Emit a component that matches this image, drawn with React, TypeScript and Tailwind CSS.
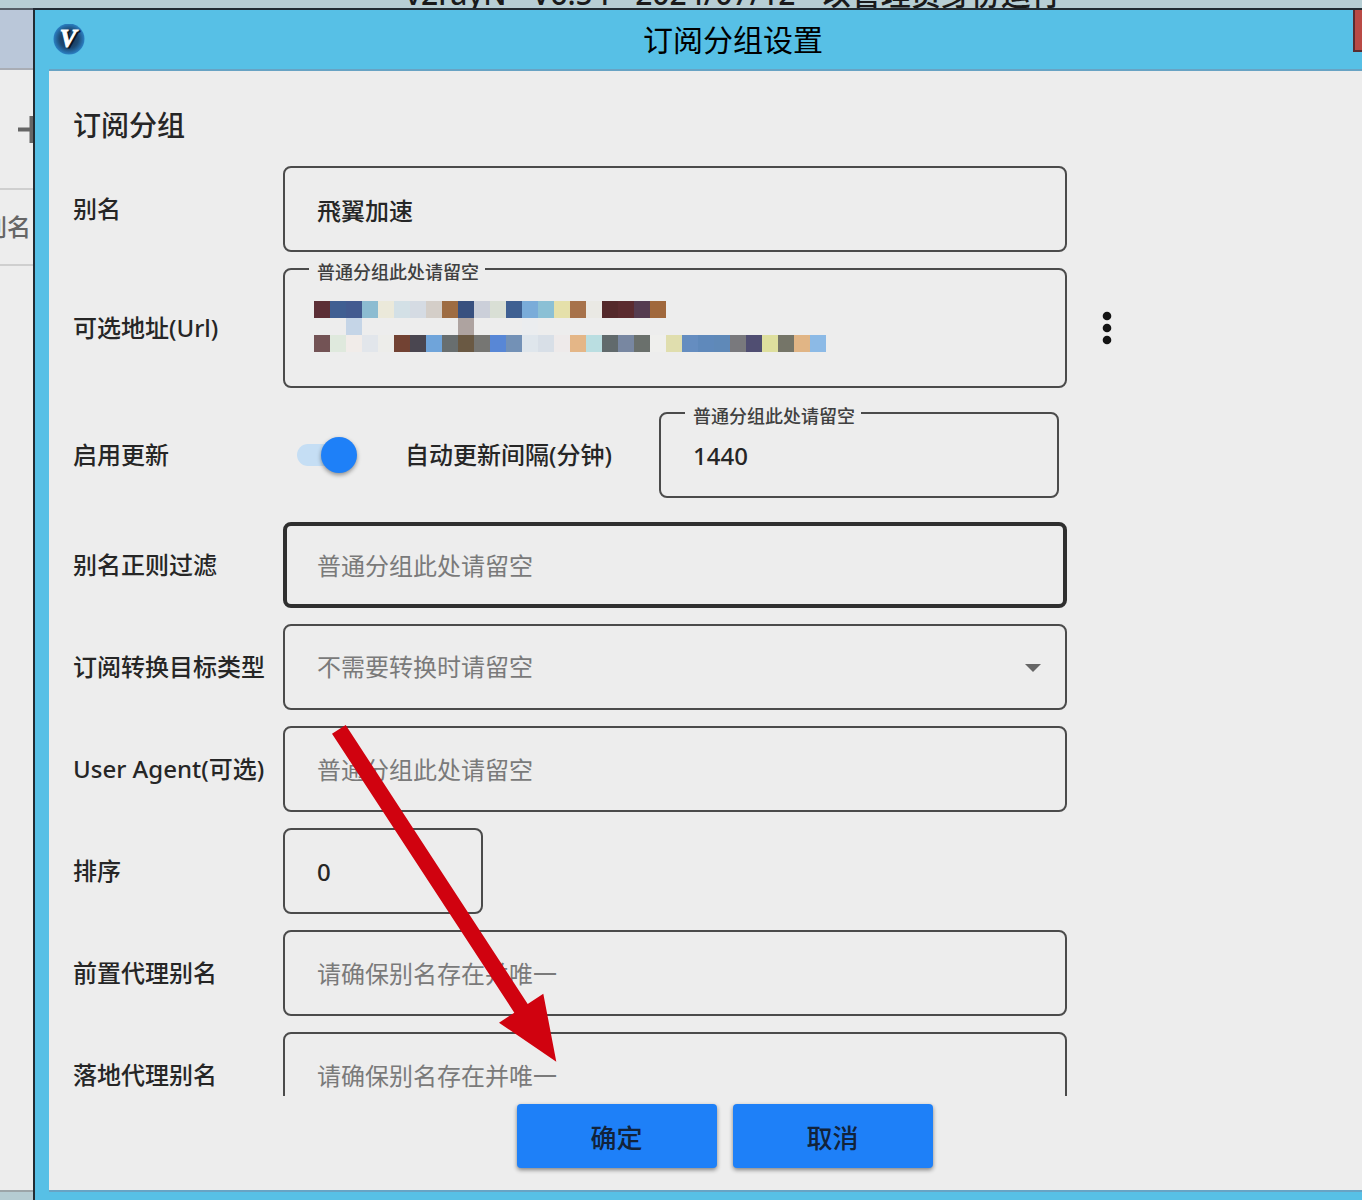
import React from "react";
import { clsx } from "clsx";

const FIELD = "block h-[86px] rounded-lg bg-transparent text-2xl font-medium text-[#262626] placeholder:font-normal placeholder:text-[#7a7a7a] placeholder:opacity-100 outline-none";
const THIN = "border-2 border-[#4b4b4b] px-8";
const THICK = "border-4 border-[#2f2f2f] px-[30px]";
const ACTION = "h-16 w-[200px] rounded bg-[#1e80f8] pt-1 text-[26px] font-medium text-[#12233a] shadow-[0_2px_4px_rgba(0,0,0,0.45)]";

const CELL_W = 16;
const CELL_H = 17;

// one array per line of the censored url, "" is an empty cell
const MOSAIC: string[][] = [
  [
    "#5c2f36", "#405f92", "#435b90", "#8cbcd1", "#ebe9da", "#d3e0e6", "#d5dbe3", "#d4cec8",
    "#9e6c42", "#38507f", "#cbcfd9", "#d9dfd5", "#3f6092", "#7aacd9", "#8bc0d5", "#e5e0aa",
    "#a7724a", "#eae9e4", "#54292b", "#5b2b2f", "#553c50", "#a0683c",
  ],
  ["", "", "#c5d5e7", "", "", "", "", "", "", "#aea3a0", "", "", "", "#ebedef"],
  [
    "#735355", "#dfe9dd", "#f1ece9", "#e2e6eb", "#ededea", "#724233", "#4a4650", "#6fa4da",
    "#686e6f", "#6a5943", "#767673", "#5887d6", "#7391b6", "#dfe6ec", "#d8dfe7", "#eeeaea",
    "#e4b687", "#badee1", "#616a6c", "#7887a1", "#6a706c", "#efefed", "#e0deae", "#658dc0",
    "#5f89bb", "#5f89b8", "#79797d", "#504e72", "#dedf9e", "#757568", "#e1b585", "#8cbae6",
  ],
];

function Mosaic() {
  return (
    <svg width="512" height="51" shapeRendering="crispEdges" className="pointer-events-none absolute left-[31px] top-[33px]" aria-hidden="true">
      {MOSAIC.map((line, y) =>
        line.map((fill, x) =>
          fill ? <rect key={`${x}-${y}`} x={x * CELL_W} y={y * CELL_H} width={CELL_W} height={CELL_H} fill={fill} /> : null
        )
      )}
    </svg>
  );
}

function Row({ id, label, children, className }: { id: string; label: string; children: React.ReactNode; className?: string }) {
  return (
    <div className={clsx("flex items-center", className)}>
      <label htmlFor={id} className="w-[210px] shrink-0 whitespace-nowrap text-2xl font-medium text-[#262626]">
        {label}
      </label>
      {children}
    </div>
  );
}

function Hint({ children }: { children: React.ReactNode }) {
  return (
    <span className="pointer-events-none absolute -top-2 left-[26px] bg-[#ededed] pl-2 pr-1.5 text-lg font-medium leading-6 text-[#404040]">{children}</span>
  );
}

function Logo() {
  return (
    <svg width="32" height="32" viewBox="0 0 32 32" className="shrink-0" aria-hidden="true">
      <defs>
        <radialGradient id="logo-bg">
          <stop offset="0%" stopColor="#16304a" />
          <stop offset="60%" stopColor="#1d4a74" />
          <stop offset="100%" stopColor="#2b80c4" />
        </radialGradient>
      </defs>
      <circle cx="16" cy="15" r="15.500" fill="url(#logo-bg)" />
      <g fontFamily="Liberation Serif, serif" fontSize="25" fontWeight="700" fontStyle="italic" textAnchor="middle" strokeWidth="1">
        <text x="17" y="24" fill="#0b1622" stroke="#0b1622">V</text>
        <text x="15" y="23" fill="#ffffff" stroke="#ffffff">V</text>
      </g>
    </svg>
  );
}

function BackWindow() {
  return (
    <div className="flex w-[33px] shrink-0 flex-col overflow-hidden border-t-2 border-[#555d66] bg-[#b5ccd2] pb-2">
      <div className="h-[60px] shrink-0 border-b-2 border-[#a9adb5] bg-[#bac7d9]" />
      <div className="flex flex-1 flex-col border-b-2 border-[#9ca5a8] bg-[#ededed]">
        <div className="flex h-[120px] shrink-0 items-center border-b-2 border-[#cfcfcf] pl-[18px]">
          <svg width="27" height="27" viewBox="0 0 27 27" className="shrink-0" aria-hidden="true">
            <path d="M0 11.500h11.500V0h4v11.500H27v4H15.500V27h-4V15.500H0z" fill="#666666" />
          </svg>
        </div>
        <div className="flex h-[76px] shrink-0 items-center justify-end border-b-2 border-[#cfcfcf] pr-[2px]">
          <span className="whitespace-nowrap text-2xl font-medium text-[#666666]">别名</span>
        </div>
      </div>
    </div>
  );
}

export default function App() {
  return (
    <div className="relative flex h-screen flex-col overflow-hidden bg-[#b7ced4] font-['Noto_Sans','Noto_Sans_CJK_SC',sans-serif]">
      <div className="flex h-2 shrink-0 items-end justify-center overflow-hidden pl-[104px]">
        <span className="whitespace-nowrap text-3xl font-medium leading-7 text-[#1a1a1a]">v2rayN - V6.54 - 2024/07/12 - 以管理员身份运行</span>
      </div>

      <div className="flex min-h-0 flex-1">
        <BackWindow />

        {/* Dialog */}
        <div role="dialog" aria-labelledby="dialog-title" className="flex min-w-0 flex-1 flex-col border-l-2 border-t-2 border-[#222c33] bg-[#57c0e6]">
          <header className="flex h-[59px] shrink-0 items-center pl-[18px]">
            <Logo />
            <h1 id="dialog-title" className="flex-1 pl-7 text-center text-3xl text-black">订阅分组设置</h1>
            <button type="button" aria-label="关闭" className="h-[42px] w-[9px] self-start border-b-2 border-l-2 border-[#5a2c30] bg-[#b94a45]" />
          </header>

          <form className="mb-2 ml-[14px] flex min-h-0 flex-1 flex-col border-y-2 border-[#68a3c4] bg-[#ededed]">
            <div className="min-h-0 flex-1 overflow-hidden pl-6 pt-[33px]">
              <h2 className="mb-5 text-[28px] font-medium leading-[42px] text-[#262626]">订阅分组</h2>

              <div className="flex flex-col gap-4">
                <Row id="alias" label="别名">
                  <input id="alias" defaultValue="飛翼加速" className={clsx(FIELD, THIN, "w-full max-w-[784px]")} />
                </Row>

                <Row id="url" label="可选地址(Url)">
                  <div className="relative w-full max-w-[784px]">
                    <textarea id="url" className="block h-[120px] w-full resize-none rounded-lg border-2 border-[#4b4b4b] bg-transparent px-8 py-7 text-2xl outline-none" />
                    <Hint>普通分组此处请留空</Hint>
                    <Mosaic />
                  </div>
                  <button type="button" aria-label="更多" className="ml-5 flex size-10 shrink-0 items-center justify-center">
                    <svg width="10" height="34" viewBox="0 0 10 34" fill="#141414">
                      <circle cx="5" cy="5" r="4.300" />
                      <circle cx="5" cy="17" r="4.300" />
                      <circle cx="5" cy="29" r="4.300" />
                    </svg>
                  </button>
                </Row>

                <Row id="update" label="启用更新" className="py-2">
                  <input
                    id="update"
                    type="checkbox"
                    role="switch"
                    defaultChecked
                    className="relative ml-[14px] mr-12 h-[22px] w-[60px] shrink-0 appearance-none rounded-full bg-[#c5def4] before:absolute before:-top-[7px] before:left-0 before:size-9 before:rounded-full before:bg-[#1e80f8] before:shadow-[0_2px_4px_rgba(0,0,0,0.4)] checked:before:left-6"
                  />
                  <label htmlFor="interval" className="w-[254px] shrink-0 whitespace-nowrap text-2xl font-medium text-[#262626]">自动更新间隔(分钟)</label>
                  <div className="relative w-full max-w-[400px]">
                    <input id="interval" defaultValue="1440" className={clsx(FIELD, THIN, "w-full")} />
                    <Hint>普通分组此处请留空</Hint>
                  </div>
                </Row>

                <Row id="filter" label="别名正则过滤">
                  <input id="filter" placeholder="普通分组此处请留空" className={clsx(FIELD, THICK, "w-full max-w-[784px]")} />
                </Row>

                <Row id="target" label="订阅转换目标类型">
                  <div className="relative w-full max-w-[784px]">
                    <select id="target" defaultValue="" className="block h-[86px] w-full appearance-none rounded-lg border-2 border-[#4b4b4b] bg-transparent px-8 text-2xl text-[#7a7a7a] outline-none">
                      <option value="">不需要转换时请留空</option>
                    </select>
                    <svg width="16" height="8" viewBox="0 0 16 8" className="pointer-events-none absolute right-[26px] top-10" aria-hidden="true">
                      <path d="M0 0h16L8 8z" fill="#666666" />
                    </svg>
                  </div>
                </Row>

                <Row id="agent" label="User Agent(可选)">
                  <input id="agent" placeholder="普通分组此处请留空" className={clsx(FIELD, THIN, "w-full max-w-[784px]")} />
                </Row>

                <Row id="sort" label="排序">
                  <input id="sort" defaultValue="0" className={clsx(FIELD, THIN, "w-[200px]")} />
                </Row>

                <Row id="prev" label="前置代理别名">
                  <input id="prev" placeholder="请确保别名存在并唯一" className={clsx(FIELD, THIN, "w-full max-w-[784px]")} />
                </Row>

                <Row id="next" label="落地代理别名">
                  <input id="next" placeholder="请确保别名存在并唯一" className={clsx(FIELD, THIN, "w-full max-w-[784px]")} />
                </Row>
              </div>
            </div>

            {/* Actions */}
            <div className="flex shrink-0 justify-center gap-4 pb-[22px] pl-[38px] pt-2">
              <button type="button" className={ACTION}>确定</button>
              <button type="button" className={ACTION}>取消</button>
            </div>
          </form>
        </div>
      </div>

      {/* Red pointer drawn over the form */}
      <svg width="225" height="337" viewBox="0 0 225 337" className="pointer-events-none absolute left-[332px] top-[725px]" aria-hidden="true">
        <path d="M13.700 0L0 8.700L182.300 287.700L167 297.700L224.300 336.700L211.300 268.700L195.700 279z" fill="#d0020f" />
      </svg>
    </div>
  );
}
